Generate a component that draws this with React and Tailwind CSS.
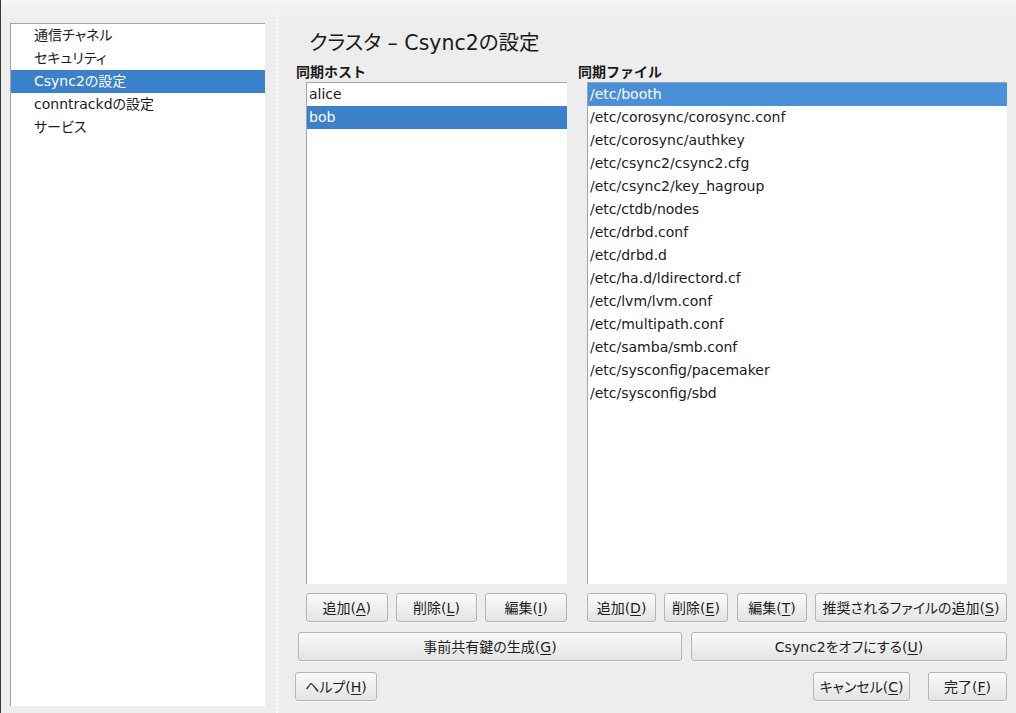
import React from 'react';

const navItems = ['通信チャネル', 'セキュリティ', 'Csync2の設定', 'conntrackdの設定', 'サービス'];
const hosts = ['alice', 'bob'];
const files = [
  '/etc/booth',
  '/etc/corosync/corosync.conf',
  '/etc/corosync/authkey',
  '/etc/csync2/csync2.cfg',
  '/etc/csync2/key_hagroup',
  '/etc/ctdb/nodes',
  '/etc/drbd.conf',
  '/etc/drbd.d',
  '/etc/ha.d/ldirectord.cf',
  '/etc/lvm/lvm.conf',
  '/etc/multipath.conf',
  '/etc/samba/smb.conf',
  '/etc/sysconfig/pacemaker',
  '/etc/sysconfig/sbd',
];

// label with a mnemonic key, e.g. 追加(A)
const Btn = ({ label, hotkey, className = '' }) => (
  <button
    className={`h-[29px] rounded-[3px] border border-[#b5b5b5] bg-gradient-to-b from-[#fbfbfb] to-[#e3e3e3] text-[14px] leading-none text-[#1e1e1e] whitespace-nowrap shadow-[0_1px_0_rgba(255,255,255,0.6)] ${className}`}
  >
    {label}(<u className="underline-offset-2">{hotkey}</u>)
  </button>
);

const ListRow = ({ text, selected, blue, pad }) => (
  <div
    className={`h-[23px] leading-[23px] text-[14px] whitespace-nowrap ${pad} ${
      selected ? `${blue} text-white` : 'text-[#1a1a1a]'
    }`}
  >
    {text}
  </div>
);

export default function App() {
  return (
    <div
      className="flex h-[713px] w-[1016px] overflow-hidden bg-[linear-gradient(to_bottom,#f5f5f5,#ededed_24px)] text-[#1a1a1a] [font-feature-settings:'palt']"
      style={{ fontFamily: '"DejaVu Sans", "Noto Sans CJK JP", sans-serif' }}
    >
      <div className="w-px bg-[#3a3a3a]" />

      {/* left navigation tree */}
      <div className="flex pl-[9px] pt-[23px] pb-[7px]">
        <div className="w-[255px] border-t border-l border-[#a3a3a3] bg-white">
          {navItems.map((item, i) => (
            <ListRow key={item} text={item} selected={i === 2} blue="bg-[#3a80cb]" pad="pl-[23px]" />
          ))}
        </div>
      </div>

      {/* splitter */}
      <div className="flex w-[19px] pl-[11px] pt-[15px]">
        <div className="h-full border-l-2 border-dotted border-white" />
      </div>

      {/* main panel */}
      <div className="flex flex-1 flex-col pr-[9px]">
        <h1 className="mt-[30px] h-[26px] pl-[25px] text-[20.5px] leading-[26px] text-[#1a1a1a]">
          クラスタ – Csync2の設定
        </h1>

        <div className="mt-[7px] flex pl-[12px]">
          <div className="flex w-[271px] flex-col">
            <div className="h-[18px] text-[14px] font-bold leading-[18px] [font-feature-settings:normal]">同期ホスト</div>
            <div className="ml-[10px] mt-[1px] h-[502px] border-t border-l border-[#a3a3a3] bg-white">
              {hosts.map((h, i) => (
                <ListRow key={h} text={h} selected={i === 1} blue="bg-[#3a80cb]" pad="pl-[2px]" />
              ))}
            </div>
            <div className="ml-[10px] mt-[9px] grid grid-cols-3 gap-[8px]">
              <Btn label="追加" hotkey="A" />
              <Btn label="削除" hotkey="L" />
              <Btn label="編集" hotkey="I" />
            </div>
          </div>

          <div className="ml-[11px] flex flex-1 flex-col">
            <div className="h-[18px] text-[14px] font-bold leading-[18px] [font-feature-settings:normal]">同期ファイル</div>
            <div className="ml-[9px] mt-[1px] h-[502px] border-t border-l border-[#a3a3a3] bg-white">
              {files.map((f, i) => (
                <ListRow key={f} text={f} selected={i === 0} blue="bg-[#4a90d9]" pad="pl-[2px]" />
              ))}
            </div>
            <div className="ml-[9px] mt-[9px] flex">
              <Btn label="追加" hotkey="D" className="w-[69px]" />
              <Btn label="削除" hotkey="E" className="ml-[8px] w-[64px]" />
              <Btn label="編集" hotkey="T" className="ml-[9px] w-[70px]" />
              <Btn label="推奨されるファイルの追加" hotkey="S" className="ml-[8px] flex-1" />
            </div>
          </div>
        </div>

        <div className="mt-[10px] flex pl-[14px]">
          <Btn label="事前共有鍵の生成" hotkey="G" className="w-[384px]" />
          <Btn label="Csync2をオフにする" hotkey="U" className="ml-[9px] flex-1" />
        </div>

        <div className="mt-[11px] flex pl-[11px]">
          <Btn label="ヘルプ" hotkey="H" className="w-[82px]" />
          <div className="flex-1" />
          <Btn label="キャンセル" hotkey="C" className="w-[97px]" />
          <Btn label="完了" hotkey="F" className="ml-[18px] w-[79px]" />
        </div>
      </div>
    </div>
  );
}
